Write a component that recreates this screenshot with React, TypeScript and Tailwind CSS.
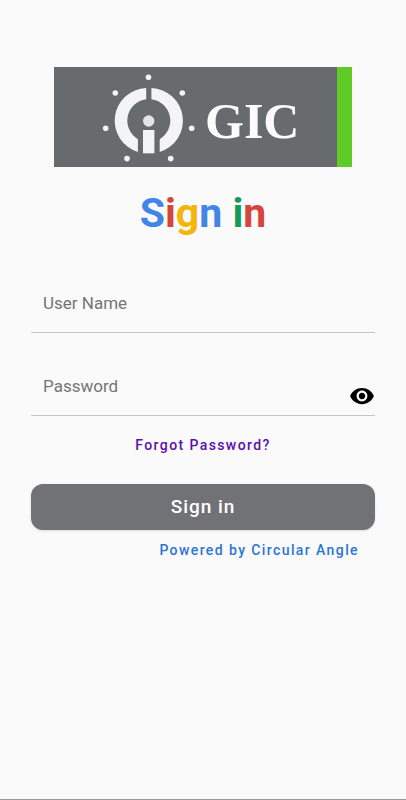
import { useState } from "react";

const titleLetters = [
  { char: "S", className: "text-[#4285e8]" },
  { char: "i", className: "text-[#d5453b]" },
  { char: "g", className: "text-[#f5b50a]" },
  { char: "n", className: "text-[#4285e8]" },
  { char: " ", className: "" },
  { char: "i", className: "text-[#159a5b]" },
  { char: "n", className: "text-[#d5453b]" },
];

const logoDots = [
  [94.5, 10.2],
  [61.3, 26],
  [128.3, 26],
  [51.7, 61.3],
  [137.7, 61.3],
  [73, 91.6],
  [116.7, 91.6],
];

function Logo() {
  return (
    <svg viewBox="0 0 298 100" className="w-[298px] max-w-full" role="img" aria-label="GIC">
      <rect width="298" height="100" fill="#676b6d" />
      <rect x="283" width="15" height="100" fill="#5fcb26" />
      <g fill="#f4f3f5">
        {logoDots.map(([cx, cy]) => (
          <circle key={`${cx}-${cy}`} cx={cx} cy={cy} r="2.8" />
        ))}
        <path d="M92.2 21.1 A32.6 32.6 0 0 0 83.9 84.9 V72.2 A21.6 21.6 0 0 1 92.2 32.2 Z" />
        <path d="M97.4 21.1 A32.6 32.6 0 0 1 105.7 84.9 V72.2 A21.6 21.6 0 0 0 97.4 32.2 Z" />
        <circle cx="94.7" cy="54" r="5.7" fill="#e4e4e5" />
        <rect x="89" y="63" width="11.4" height="23.3" />
      </g>
      <text x="151" y="71" fill="#fbfafc" fontSize="50" fontWeight="700" fontFamily="'Liberation Serif', serif">
        GIC
      </text>
    </svg>
  );
}

function EyeIcon() {
  return (
    <svg viewBox="0 0 24 24" className="size-[26px]" fill="currentColor" aria-hidden="true">
      <path d="M12 4.5C7 4.5 2.73 7.61 1 12c1.73 4.39 6 7.5 11 7.5s9.27-3.11 11-7.5c-1.73-4.39-6-7.5-11-7.5zM12 17c-2.76 0-5-2.24-5-5s2.24-5 5-5 5 2.24 5 5-2.24 5-5 5zm0-8c-1.66 0-3 1.34-3 3s1.34 3 3 3 3-1.34 3-3-1.34-3-3-3z" />
    </svg>
  );
}

const inputClass =
  "min-w-0 flex-1 bg-transparent px-3 pt-0.5 text-[17px] text-gray-800 placeholder:text-[#757575] focus:outline-none";

export default function App() {
  const [userName, setUserName] = useState("");
  const [password, setPassword] = useState("");
  const [showPassword, setShowPassword] = useState(false);

  return (
    <main className="flex min-h-screen flex-col items-center border-b border-[#999999] bg-[#fafafa] px-[31px] pt-[67px] font-['Roboto',sans-serif]">
      <Logo />

      <h1 className="mt-[22px] text-[41px] leading-12 font-bold">
        {titleLetters.map((letter, i) => (
          <span key={i} className={letter.className}>
            {letter.char}
          </span>
        ))}
      </h1>

      <form className="mt-9 flex w-full flex-col" onSubmit={(e) => e.preventDefault()}>
        <div className="flex h-[60px] border-b border-[#c4c4c4]">
          <input
            type="text"
            aria-label="User Name"
            placeholder="User Name"
            value={userName}
            onChange={(e) => setUserName(e.target.value)}
            className={inputClass}
          />
        </div>

        <div className="mt-[23px] flex h-[60px] border-b border-[#c4c4c4]">
          <input
            type={showPassword ? "text" : "password"}
            aria-label="Password"
            placeholder="Password"
            value={password}
            onChange={(e) => setPassword(e.target.value)}
            className={inputClass}
          />
          <button
            type="button"
            aria-label="Show password"
            onClick={() => setShowPassword(!showPassword)}
            className="self-end pb-[6px] text-black"
          >
            <EyeIcon />
          </button>
        </div>

        <a href="#forgot" className="mt-[19px] self-center text-sm font-medium tracking-widest text-[#5a0fae]">
          Forgot Password?
        </a>

        <button
          type="submit"
          className="mt-[29px] h-[46px] rounded-xl bg-[#717276] text-[19px] font-medium tracking-wider text-white shadow"
        >
          Sign in
        </button>
      </form>

      <a href="#about" className="mt-[10px] mr-4 self-end text-sm font-medium tracking-widest text-[#2a76d2]">
        Powered by Circular Angle
      </a>
    </main>
  );
}
